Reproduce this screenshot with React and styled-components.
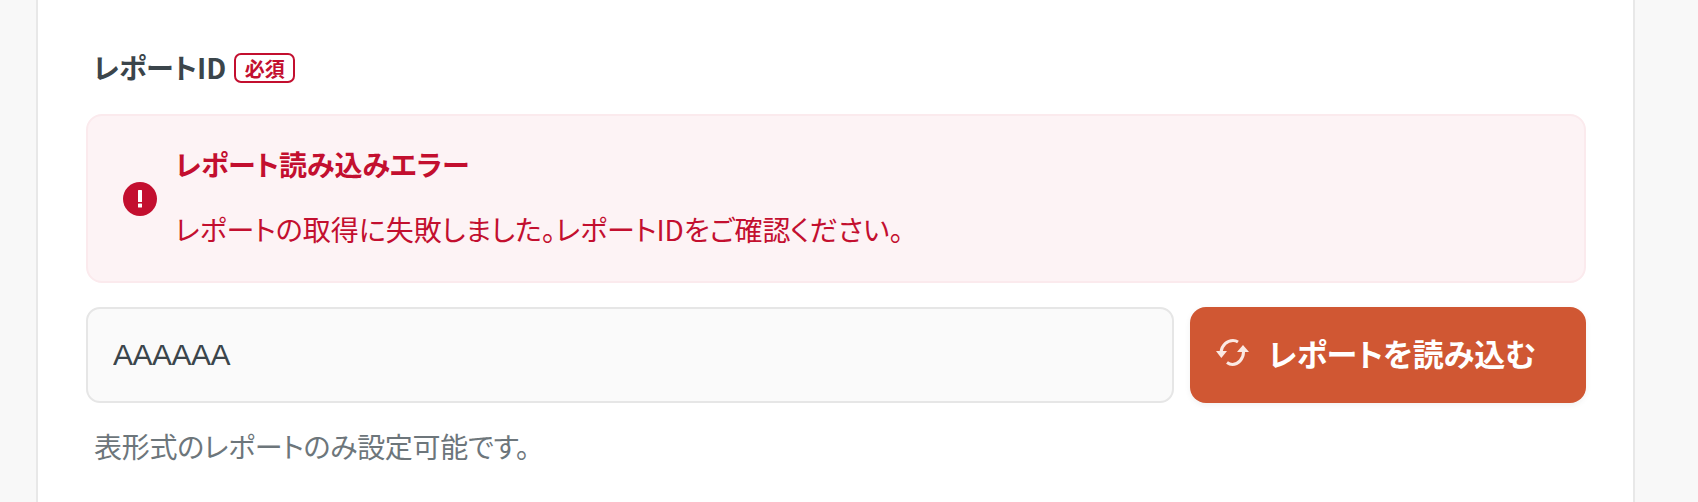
import React from "react";
import styled, { createGlobalStyle } from "styled-components";

const GlobalStyle = createGlobalStyle`
  html, body {
    margin: 0;
    height: 100%;
    background: #f8f8f8;
  }
  body {
    font-family: "Noto Sans CJK JP", "Noto Sans", sans-serif;
    overflow: hidden;
  }
`;

const Page = styled.div`
  height: 502px;
  padding: 0 63px 0 36px;
`;

const Panel = styled.section`
  height: 502px;
  box-sizing: border-box;
  background: #fff;
  border-left: 2px solid #e8e8e8;
  border-right: 2px solid #e8e8e8;
  padding: 50px 47px 0 48px;
`;

const LabelRow = styled.div`
  display: flex;
  align-items: center;
  gap: 8px;
  padding-left: 7px;
  height: 34px;
  margin-bottom: 30px;
`;

const Label = styled.label`
  font-size: 28px;
  font-weight: 700;
  color: #3b454b;
  font-feature-settings: "palt";
`;

const Required = styled.span`
  box-sizing: border-box;
  height: 30px;
  width: 61px;
  margin-top: 2px;
  display: flex;
  align-items: center;
  justify-content: center;
  border: 2px solid #c30f2f;
  border-radius: 7px;
  color: #c30f2f;
  font-size: 20px;
  font-weight: 700;
`;

const Alert = styled.div`
  box-sizing: border-box;
  height: 169px;
  display: flex;
  align-items: center;
  gap: 18px;
  padding: 0 35px;
  background: #fdf3f5;
  border: 2px solid #fbeaed;
  border-radius: 16px;
  color: #c30f2f;
`;

const AlertBody = styled.div`
  display: flex;
  flex-direction: column;
  gap: 27px;
  padding-bottom: 5px;
`;

const AlertTitle = styled.div`
  font-size: 28px;
  line-height: 38px;
  font-weight: 700;
  font-feature-settings: "palt";
`;

const AlertText = styled.div`
  font-size: 28px;
  line-height: 38px;
  font-feature-settings: "palt";
`;

const InputRow = styled.div`
  display: flex;
  gap: 16px;
  margin-top: 24px;
`;

const Input = styled.input`
  flex: 1;
  min-width: 0;
  box-sizing: border-box;
  height: 96px;
  padding: 0 25px;
  background: #fafafa;
  border: 2px solid #e6e6e6;
  border-radius: 14px;
  color: #3b454b;
  font-family: "Liberation Sans", sans-serif;
  font-size: 30px;
  letter-spacing: -0.5px;
  outline: none;
`;

const LoadButton = styled.button`
  flex: none;
  width: 396px;
  height: 96px;
  display: flex;
  align-items: center;
  gap: 19px;
  padding: 0 0 5px 26px;
  background: #d05733;
  border: none;
  border-radius: 16px;
  box-shadow: 0 2px 6px rgba(0, 0, 0, 0.06);
  color: #fff;
  font-family: inherit;
  font-size: 31px;
  font-weight: 700;
  font-feature-settings: "palt";
`;

const Hint = styled.p`
  margin: 24px 0 0 8px;
  font-size: 28px;
  line-height: 38px;
  letter-spacing: -0.3px;
  color: #6d767b;
  font-feature-settings: "palt";
`;

function ErrorIcon() {
  return (
    <svg width="34" height="34" viewBox="0 0 34 34" style={{ flex: "none" }}>
      <circle cx="17" cy="17" r="17" fill="#c30f2f" />
      <rect x="15" y="8" width="4" height="12" rx="0.5" fill="#fff" />
      <rect x="15" y="21.500" width="4" height="4" rx="0.5" fill="#fff" />
    </svg>
  );
}

function RefreshIcon() {
  return (
    <svg width="33" height="27" viewBox="0 0 33 27" fill="none" stroke="#fbe9e3" strokeWidth="3">
      <path d="M5 13 C6 6 11 1.500 17 1.500 C19 1.500 20.500 2 22 3" />
      <path d="M0 12 L11 12 L5.300 19 Z" fill="#fbe9e3" stroke="none" />
      <path d="M27.500 13 C27.500 20 22 25.500 16.500 25.500 C14.500 25.500 13 25 11 23.500" />
      <path d="M21 13 L33 13 L27 6 Z" fill="#fbe9e3" stroke="none" />
    </svg>
  );
}

export default function App() {
  return (
    <>
      <GlobalStyle />
      <Page>
        <Panel>
          <LabelRow>
            <Label>レポートID</Label>
            <Required>必須</Required>
          </LabelRow>
          <Alert>
            <ErrorIcon />
            <AlertBody>
              <AlertTitle>レポート読み込みエラー</AlertTitle>
              <AlertText>レポートの取得に失敗しました。レポートIDをご確認ください。</AlertText>
            </AlertBody>
          </Alert>
          <InputRow>
            <Input defaultValue="AAAAAA" />
            <LoadButton>
              <RefreshIcon />
              レポートを読み込む
            </LoadButton>
          </InputRow>
          <Hint>表形式のレポートのみ設定可能です。</Hint>
        </Panel>
      </Page>
    </>
  );
}
